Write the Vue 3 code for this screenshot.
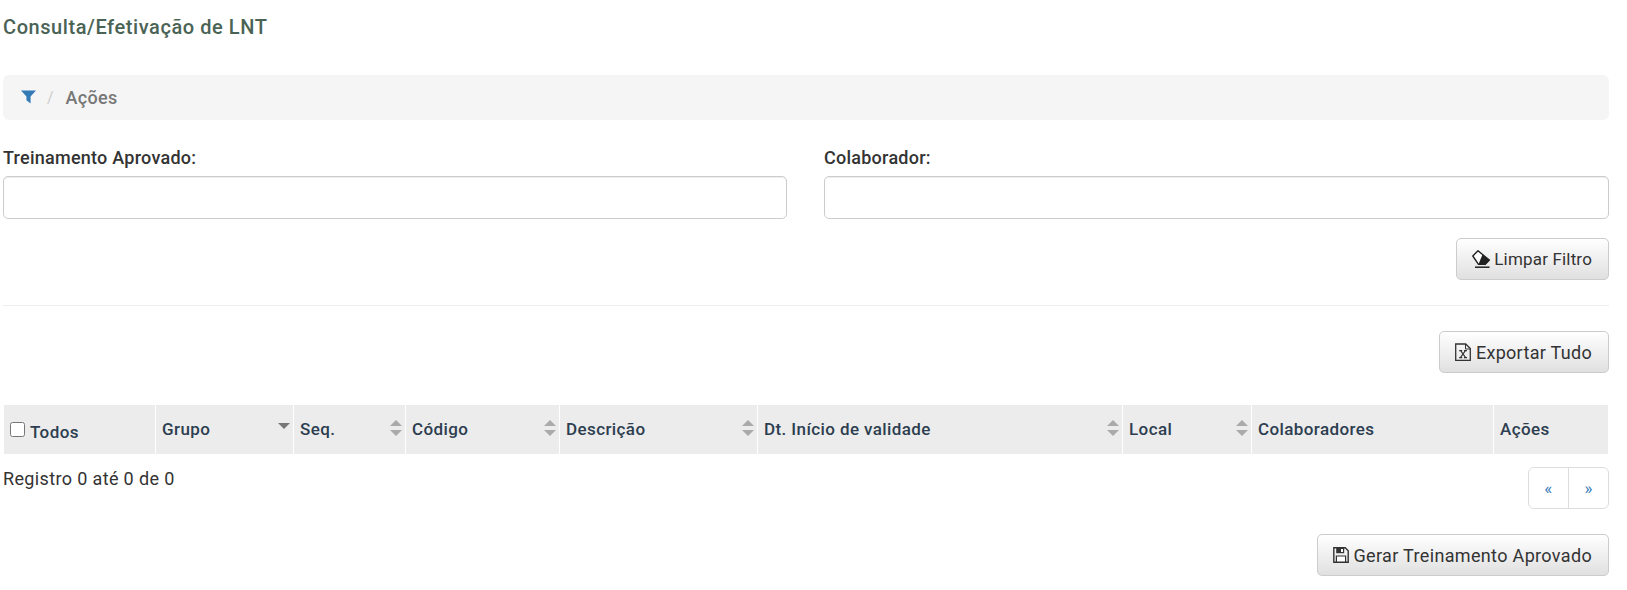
<script setup>
const columns = [
  { label: 'Grupo', w: 138, sort: 'desc' },
  { label: 'Seq.', w: 112, sort: 'both' },
  { label: 'Código', w: 154, sort: 'both' },
  { label: 'Descrição', w: 198, sort: 'both' },
  { label: 'Dt. Início de validade', w: 365, sort: 'both' },
  { label: 'Local', w: 129, sort: 'both' },
  { label: 'Colaboradores', w: 242, sort: '' },
  { label: 'Ações', w: 115, sort: '' }
]
</script>

<template>
  <div class="page">
    <h1 class="title">Consulta/Efetivação de LNT</h1>

    <nav class="crumb">
      <svg class="funnel" viewBox="0 0 16 16" width="15" height="15"><path d="M0 1.5h16L10.2 8v7.5L5.8 12V8z" fill="#337ab7"/></svg>
      <span class="sep">/</span>
      <span class="crumb-text">Ações</span>
    </nav>

    <div class="filters">
      <label class="field">
        <span class="lbl">Treinamento Aprovado:</span>
        <input class="inp" type="text" />
      </label>
      <label class="field">
        <span class="lbl">Colaborador:</span>
        <input class="inp" type="text" />
      </label>
    </div>

    <div class="actions first">
      <button class="btn btn-clear">
        <svg viewBox="0 0 18 18" width="18" height="18"><path d="M0.8 6 6 0.8 17.2 10 13 14.4H6.5z" fill="#fff" stroke="#222" stroke-width="1.4" stroke-linejoin="round"/><path d="M10.5 4.4 18 10 13.2 15H6.2z" fill="#222"/><path d="M3 17.2h14.5" stroke="#222" stroke-width="1.5"/></svg>
        <span>Limpar Filtro</span>
      </button>
    </div>

    <hr class="rule" />

    <div class="actions">
      <button class="btn">
        <svg viewBox="0 0 16 18" width="16" height="18"><path d="M0.7 1h10l4.6 4.6v11.7H0.7z" fill="none" stroke="#333" stroke-width="1.3"/><path d="M10.5 1v5h5" fill="none" stroke="#333" stroke-width="1"/><path d="M4.2 7.6h3M9 7.6h3M4.2 14.6h3M9 14.6h3M5.6 7.6l5 7M10.4 7.6l-5 7" fill="none" stroke="#333" stroke-width="1.1"/></svg>
        <span>Exportar Tudo</span>
      </button>
    </div>

    <table class="grid">
      <thead>
        <tr>
          <th class="check-col">
            <span class="check-wrap"><input class="check" type="checkbox" /><span>Todos</span></span>
          </th>
          <th v-for="c in columns" :key="c.label" :style="{ width: c.w + 'px' }">
            {{ c.label }}
            <span v-if="c.sort === 'both'" class="sort both"></span>
            <span v-else-if="c.sort === 'desc'" class="sort desc"></span>
          </th>
        </tr>
      </thead>
    </table>

    <div class="footer-row">
      <div class="count">Registro 0 até 0 de 0</div>
      <div class="pager">
        <a class="pg">«</a>
        <a class="pg">»</a>
      </div>
    </div>

    <div class="actions last">
      <button class="btn">
        <svg viewBox="0 0 16 16" width="16" height="16"><path d="M0.8 0.8h11.4l3 3v11.4H0.8z" fill="none" stroke="#333" stroke-width="1.4"/><path d="M3.2 1h8v5.2h-8z" fill="#333"/><path d="M8 2h2v3H8z" fill="#fff"/><path d="M3.4 9h9.2v6H3.4z" fill="#fff" stroke="#333" stroke-width="1.2"/></svg>
        <span class="wide">Gerar Treinamento Aprovado</span>
      </button>
    </div>
  </div>
</template>

<style scoped>
.page {
  width: 1606px;
  padding: 0 0 0 3px;
  font-family: Roboto, "Liberation Sans", sans-serif;
  font-size: 18px;
  color: #333;
}
.title {
  margin: 0;
  padding-top: 17px;
  height: 58px;
  box-sizing: border-box;
  font-size: 20px;
  line-height: 21px;
  letter-spacing: 0.57px;
  font-weight: 500;
  color: #4a6355;
}
.crumb {
  display: flex;
  align-items: center;
  height: 45px;
  box-sizing: border-box;
  margin-top: 17px;
  padding-left: 18px;
  background: #f5f5f5;
  border-radius: 6px;
}
.funnel { position: relative; top: -1px; }
.sep { color: #ccc; margin-left: 11px; margin-right: 12px; font-size: 16px; }
.crumb-text { color: #777; font-weight: 500; font-size: 18px; letter-spacing: 0.3px; }
.filters {
  display: grid;
  grid-template-columns: 784px 785px;
  column-gap: 37px;
  margin-top: 27px;
}
.field { display: block; }
.lbl {
  display: block;
  height: 29px;
  padding-top: 1px;
  box-sizing: border-box;
  font-weight: 500;
  font-size: 18px;
  line-height: 20px;
  letter-spacing: 0.25px;
  color: #333;
}
.inp {
  display: block;
  width: 100%;
  height: 43px;
  box-sizing: border-box;
  border: 1px solid #ccc;
  border-radius: 5px;
  background: #fff;
  box-shadow: inset 0 1px 1px rgba(0,0,0,.075);
}
.actions { display: flex; justify-content: flex-end; }
.actions.first { margin-top: 19px; }
.actions.last { margin-top: 25px; }
.btn {
  display: inline-flex;
  align-items: center;
  gap: 5px;
  height: 42px;
  padding: 0 16px 0 15px;
  box-sizing: border-box;
  border: 1px solid #ccc;
  border-radius: 5px;
  background: linear-gradient(to bottom, #fff 0%, #e0e0e0 100%);
  font: inherit;
  letter-spacing: 0.3px;
  font-size: 18px;
  color: #333;
}
.btn-clear { font-size: 17px; letter-spacing: 0.17px; gap: 4px; }
.wide { letter-spacing: 0.34px; }
.rule {
  margin: 25px 0 25px;
  border: 0;
  border-top: 1px solid #eee;
}
.grid {
  margin: 32px 0 0 1px;
  width: 1604px;
  table-layout: fixed;
  border-collapse: separate;
  border-spacing: 0;
}
.grid th {
  position: relative;
  height: 49px;
  padding: 0 6px 1px 6px;
  box-sizing: border-box;
  background: #ececec;
  border-left: 1px solid #fff;
  text-align: left;
  font-weight: 500;
  font-size: 17px;
  letter-spacing: 0.4px;
  color: #2c3e50;
}
.grid th.check-col { width: 151px; border-left: 0; padding: 0 0 0 6px; }
.check-wrap { display: inline-flex; align-items: center; gap: 5px; position: relative; top: 3px; }
.check { margin: 0; width: 15px; height: 15px; position: relative; top: -2px; }
.sort {
  position: absolute;
  right: 3.5px;
  width: 0;
  height: 0;
  border-left: 6px solid transparent;
  border-right: 6px solid transparent;
}
.sort.desc { top: 18px; border-top: 6px solid #777; }
.sort.both { top: 25px; border-top: 6px solid #aaa; }
.sort.both::before {
  content: "";
  position: absolute;
  left: -6px;
  top: -16px;
  border-left: 6px solid transparent;
  border-right: 6px solid transparent;
  border-bottom: 6px solid #aaa;
}
.footer-row {
  display: flex;
  justify-content: space-between;
  align-items: flex-start;
  margin-top: 13px;
}
.count { font-size: 18px; letter-spacing: 0.36px; line-height: 24px; color: #333; }
.pager {
  display: flex;
  height: 42px;
  box-sizing: border-box;
  border: 1px solid #ddd;
  border-radius: 6px;
  background: #fff;
}
.pg {
  width: 39.25px;
  display: flex;
  align-items: center;
  justify-content: center;
  color: #337ab7;
  font-size: 17px;
}
.pg + .pg { border-left: 1px solid #ddd; }
</style>
